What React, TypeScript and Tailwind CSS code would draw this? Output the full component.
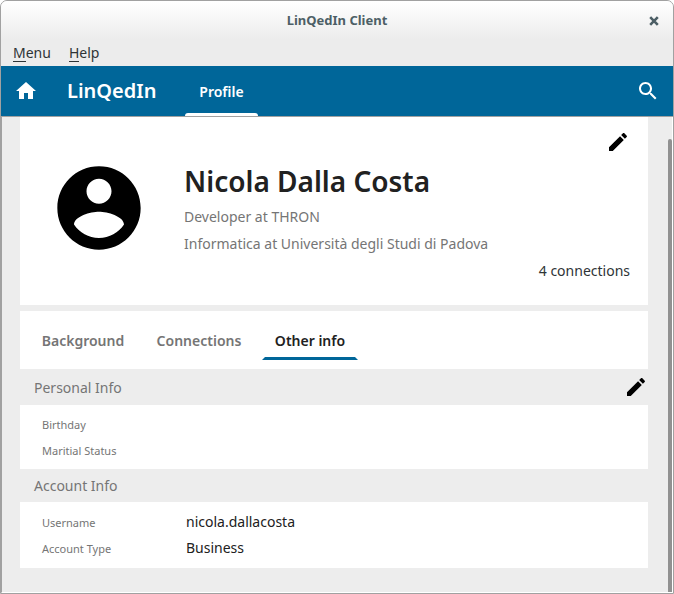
import React from "react";

function Icon({ path, className }: { path: string; className: string }) {
  return (
    <svg viewBox="0 0 24 24" fill="currentColor" className={className} aria-hidden="true">
      <path d={path} />
    </svg>
  );
}

const HOME = "M10 20v-6h4v6h5v-8h3L12 3 2 12h3v8z";
const SEARCH =
  "M15.5 14h-.79l-.28-.27C15.41 12.59 16 11.11 16 9.5 16 5.91 13.09 3 9.5 3S3 5.91 3 9.5 5.91 16 9.5 16c1.61 0 3.09-.59 4.23-1.57l.27.28v.79l5 4.99L20.49 19l-4.99-5zm-6 0C7.01 14 5 11.99 5 9.5S7.01 5 9.5 5 14 7.01 14 9.5 11.99 14 9.5 14z";
const EDIT =
  "M3 17.25V21h3.75L17.81 9.94l-3.75-3.75L3 17.25zM20.71 7.04c.39-.39.39-1.02 0-1.41l-2.34-2.34c-.39-.39-1.02-.39-1.41 0l-1.83 1.83 3.75 3.75 1.83-1.83z";
const PERSON =
  "M12 2C6.48 2 2 6.48 2 12s4.48 10 10 10 10-4.48 10-10S17.52 2 12 2zm0 3c1.66 0 3 1.34 3 3s-1.34 3-3 3-3-1.34-3-3 1.34-3 3-3zm0 14.2c-2.5 0-4.71-1.28-6-3.22.03-1.99 4-3.08 6-3.08 1.99 0 5.97 1.09 6 3.08-1.29 1.94-3.5 3.22-6 3.22z";

function TitleBar() {
  return (
    <header className="grid h-[39px] grid-cols-[1fr_auto_1fr] items-center bg-linear-to-b from-white to-[#ececec] text-[#4d5f66]">
      <h1 className="col-start-2 text-[13px] font-bold">LinQedIn Client</h1>
      <button aria-label="Close" className="mr-[14px] justify-self-end">
        <svg viewBox="0 0 10 10" className="size-[10px]" stroke="currentColor" strokeWidth="2.6" aria-hidden="true">
          <path d="M1.2 1.2 8.8 8.8M8.8 1.2 1.2 8.8" />
        </svg>
      </button>
    </header>
  );
}

function MenuItem({ label }: { label: string }) {
  return (
    <button className="leading-5">
      <span className="inline-block border-b border-[#2e3436] leading-[17px]">{label[0]}</span>
      {label.slice(1)}
    </button>
  );
}

function NavBar() {
  return (
    <nav className="flex h-[50px] items-stretch bg-[#006699] text-white">
      <button aria-label="Home" className="ml-[13px] self-center">
        <Icon path={HOME} className="size-6" />
      </button>
      <span className="ml-[29px] w-[118px] self-center text-[20px] font-semibold">LinQedIn</span>
      <button aria-current="page" className="relative w-[73px] text-[14px] font-semibold">
        Profile
        <span className="absolute inset-x-0 bottom-0 h-[3px] rounded-t-[3px] bg-white" />
      </button>
      <button aria-label="Search" className="mr-[13px] ml-auto self-center">
        <Icon path={SEARCH} className="size-6" />
      </button>
    </nav>
  );
}

function Tab({ label, width, active }: { label: string; width: string; active?: boolean }) {
  return (
    <button
      role="tab"
      aria-selected={!!active}
      className={`relative h-[38px] pb-[2px] text-[14px] font-semibold ${width} ${active ? "text-[#212121]" : "text-[#757575]"}`}
    >
      {label}
      {active && (
        <svg
          viewBox="0 0 96 3"
          preserveAspectRatio="none"
          className="absolute inset-x-0 bottom-0 h-[3px] w-full"
          aria-hidden="true"
        >
          <path d="M3 0H93L96 3H0Z" fill="#006699" />
        </svg>
      )}
    </button>
  );
}

function InfoRow({ label, value }: { label: string; value?: string }) {
  return (
    <div className="flex h-[26px] items-baseline leading-[26px]">
      <dt className="w-[144px] text-[11px] text-[#757575]">{label}</dt>
      <dd className="text-[#212121]">{value || "\u00a0"}</dd>
    </div>
  );
}

export default function App() {
  return (
    <div className="bg-white">
      <div
        className="flex min-h-screen flex-col overflow-hidden rounded-t-[7px] border border-[#a1a1a1] bg-[#ececec] text-[14px] text-[#2e3436]"
        style={{ fontFamily: '"Noto Sans", "Open Sans", sans-serif' }}
      >
        <TitleBar />
        <div className="flex h-[26px] items-center gap-[18px] px-3">
          <MenuItem label="Menu" />
          <MenuItem label="Help" />
        </div>
        <NavBar />

        <div className="flex grow border-t border-b border-l border-t-[#a1a1a1] border-b-white border-l-[#a1a1a1] bg-[#ededed]">
          <main className="mr-5 ml-[18px] grow pb-6">
            <section className="relative flex h-[188px] bg-white">
              <Icon path={PERSON} className="mt-[41px] ml-[29px] size-[100px] text-black" />
              <div className="ml-[35px] flex grow flex-col pt-[43px] pr-[18px]">
                <h2 className="text-[28px] leading-[43px] font-semibold text-[#212121]">Nicola Dalla Costa</h2>
                <p className="leading-[27px] text-[#757575]">Developer at THRON</p>
                <p className="leading-[27px] text-[#757575]">Informatica at Università degli Studi di Padova</p>
                <p className="self-end leading-[27px]">4 connections</p>
              </div>
              <button aria-label="Edit profile" className="absolute top-[13px] right-[18px] text-black">
                <Icon path={EDIT} className="size-6" />
              </button>
            </section>

            <div role="tablist" className="mt-[6px] flex h-[58px] gap-2 bg-white pt-[11px] pl-[10px]">
              <Tab label="Background" width="w-[106px]" />
              <Tab label="Connections" width="w-[110px]" />
              <Tab label="Other info" width="w-[96px]" active />
            </div>

            <section>
              <div className="flex h-9 items-center justify-between pl-[14px]">
                <h3 className="text-[#757575]">Personal Info</h3>
                <button aria-label="Edit personal info" className="text-black">
                  <Icon path={EDIT} className="size-6" />
                </button>
              </div>
              <dl className="bg-white px-[22px] py-[6px]">
                <InfoRow label="Birthday" />
                <InfoRow label="Maritial Status" />
              </dl>
            </section>

            <section>
              <h3 className="pl-[14px] leading-[33px] text-[#757575]">Account Info</h3>
              <dl className="bg-white px-[22px] py-[7px]">
                <InfoRow label="Username" value="nicola.dallacosta" />
                <InfoRow label="Account Type" value="Business" />
              </dl>
            </section>
          </main>
          <div className="mt-[22px] w-[4px] shrink-0 rounded-t-[3px] bg-[#919191]" />
          <div className="w-px shrink-0 bg-white" />
        </div>
      </div>
    </div>
  );
}
